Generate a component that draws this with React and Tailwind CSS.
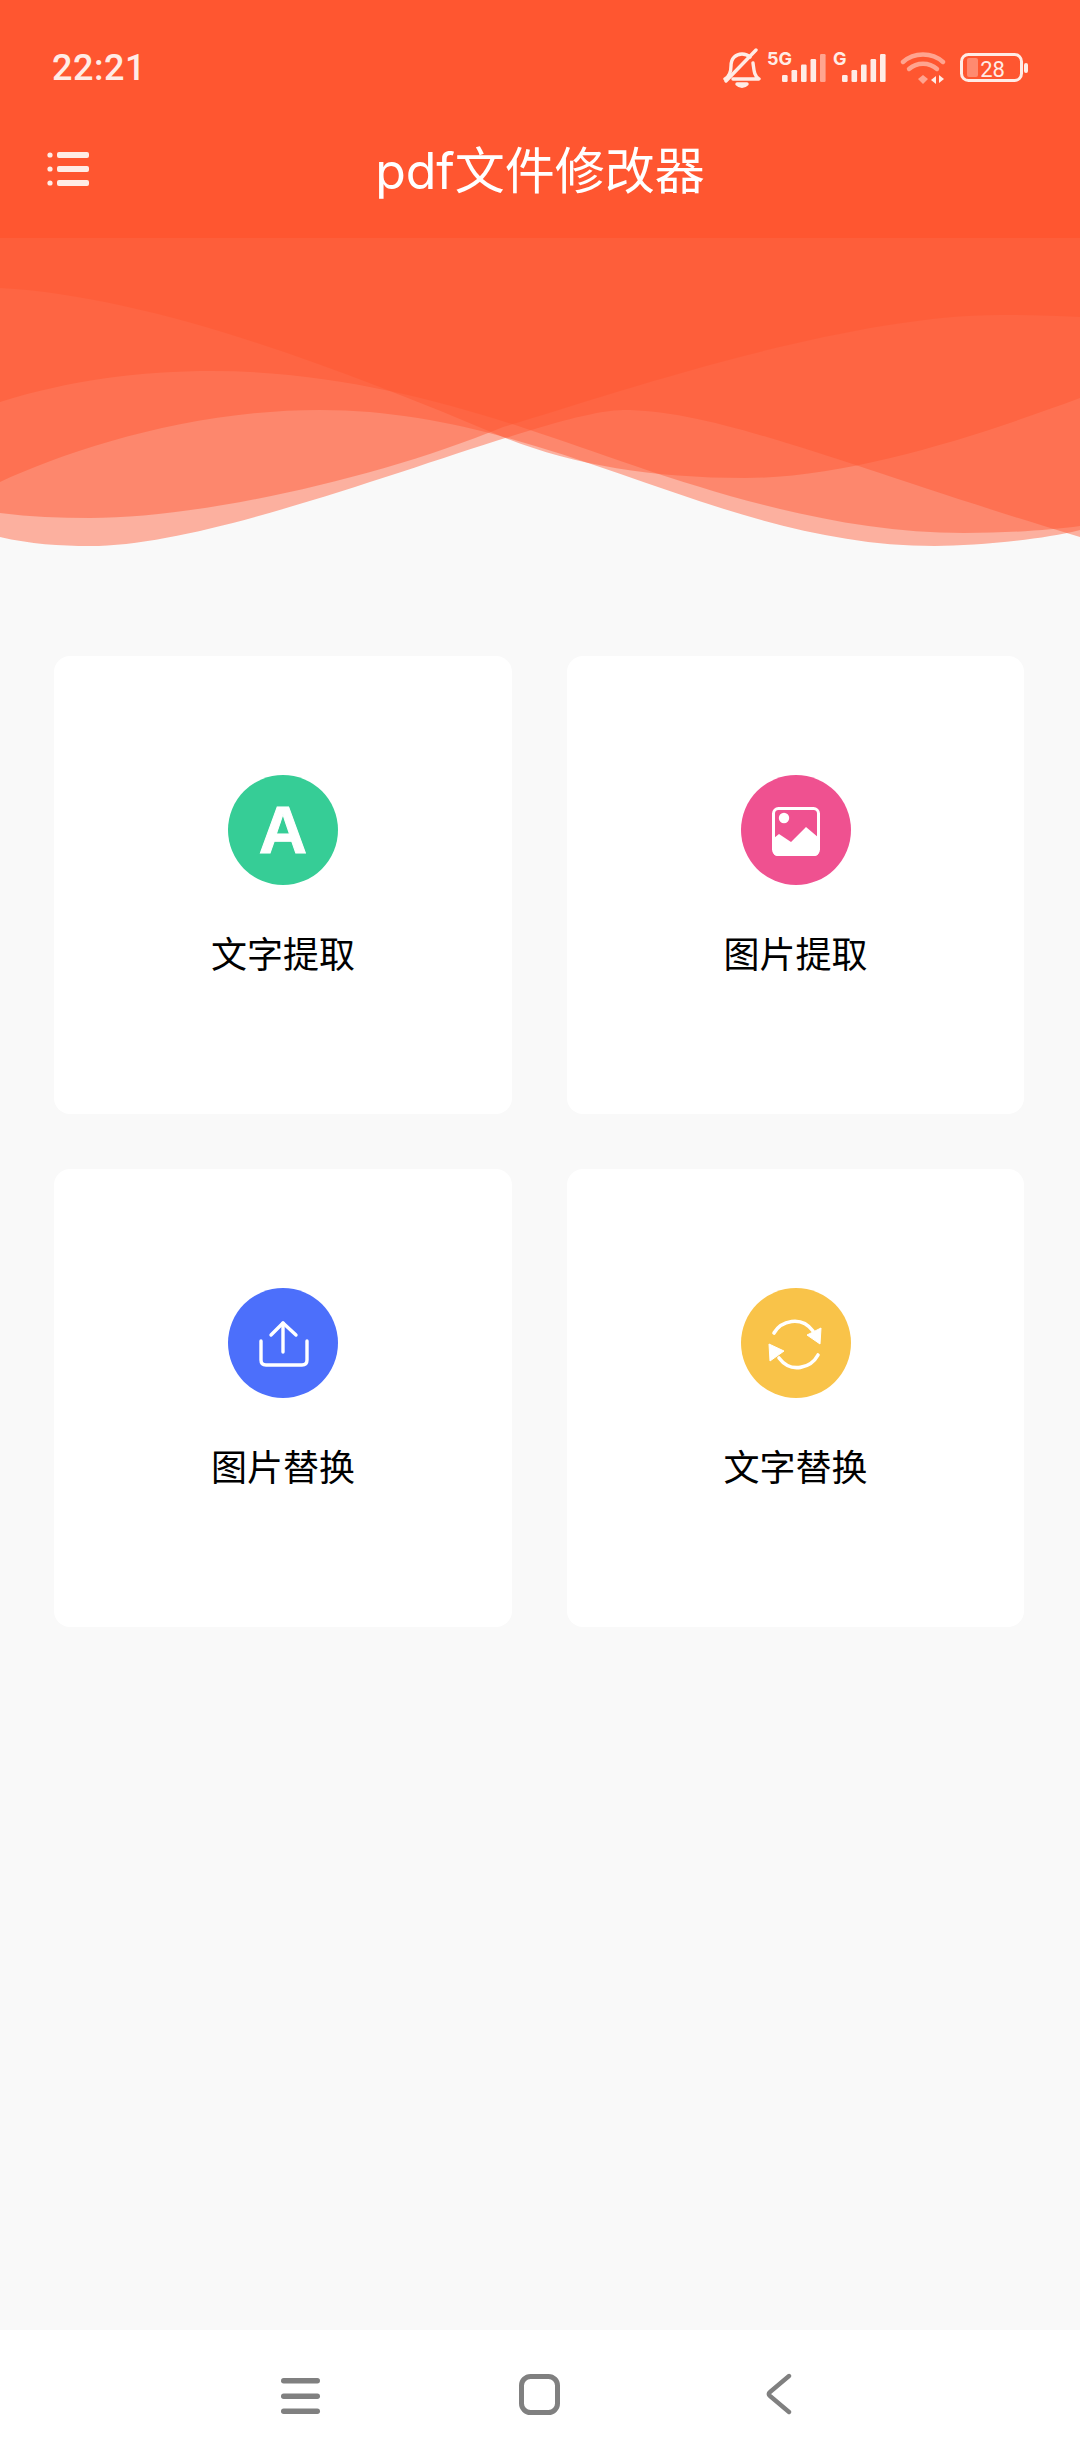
const CJK = { fontFamily: '"Inter","Noto Sans CJK SC",sans-serif' };

const close = ' L1080 238 L0 238 Z';
const waves = [
  'M0 288 C150 296 340 368 503 437 C570 464 650 478 745 478 C850 478 980 435 1080 398',
  'M0 402 C70 380 140 371 213 371 C330 371 440 400 527 429 C640 466 800 533 964 533 C1010 533 1050 530 1080 526',
  'M0 482 C70 450 190 410 320 410 C549 410 717 546 935 546 C975 546 1040 540 1080 530',
  'M0 513 C30 517 60 518 90 518 C200 518 380 478 503 427 C600 398 840 315 1000 315 C1030 315 1055 316 1080 317',
  'M0 537 C30 544 60 546 90 546 C240 546 543 410 623 410 C720 410 850 468 1080 537',
];

function Wave() {
  return (
    <svg width="1080" height="320" viewBox="0 238 1080 320" className="block">
      {waves.map((d, i) => (
        <path key={i} d={d + close} fill="#ff5630" fillOpacity="0.45" />
      ))}
    </svg>
  );
}

function Bars({ dimLast }) {
  const xs = [0, 9.5, 19, 28.5, 38];
  const tops = [21, 16, 10.5, 5, 0];
  return (
    <svg width="44" height="28" viewBox="0 0 44 28" className="block">
      {xs.map((x, i) => (
        <rect key={i} x={x} y={tops[i]} width="5.6" height={28 - tops[i]} rx="1.2" fill={dimLast && i === 4 ? '#ffa48f' : '#ffece6'} />
      ))}
    </svg>
  );
}

function StatusBar() {
  return (
    <div className="h-[136px] flex items-start justify-between pl-[52px] pr-[50px]">
      <div className="mt-[45px] text-[36px] leading-[46px] font-medium tracking-[0.5px] text-[#ffece6]" style={{ fontFamily: 'Roboto, sans-serif' }}>22:21</div>
      <div className="flex items-start mt-[48px]">
        <svg width="38" height="40" viewBox="0 0 38 40" className="block" fill="none" stroke="#ffece6" strokeWidth="3.4" strokeLinecap="round" strokeLinejoin="round">
          <path d="M2 31 C7 28 8 24 8 18 C8 10 13 6 19 6 C22 6 25 7 27 9" />
          <path d="M30 15 C31 22 31 28 36 31 L10 31" />
          <path d="M3 33 L33 2" />
          <path d="M14 36 C17 39 21 39 24 36 Z" fill="#ffece6" />
        </svg>
        <div className="relative w-[66px] h-[36px] ml-[6px]">
          <span className="absolute left-0 top-[2px] text-[18px] leading-[18px] font-bold text-[#ffece6]" style={{ fontFamily: 'Inter, sans-serif' }}>5G</span>
          <div className="absolute left-[15px] top-[6px]"><Bars dimLast /></div>
        </div>
        <div className="relative w-[53px] h-[36px]">
          <span className="absolute left-0 top-[2px] text-[18px] leading-[18px] font-bold text-[#ffece6]" style={{ fontFamily: 'Inter, sans-serif' }}>G</span>
          <div className="absolute left-[9px] top-[6px]"><Bars /></div>
        </div>
        <svg width="46" height="36" viewBox="0 0 46 36" className="block ml-[14px] mt-[2px]" fill="none" strokeLinecap="round">
          <path d="M3 12 C14 2 32 2 43 12" stroke="#ffa48f" strokeWidth="4.4" />
          <path d="M9 19 C17 12 29 12 37 19" stroke="#ffa48f" strokeWidth="4.4" />
          <path d="M18 29 L23 25 L28 29 L23 34 Z" fill="#ffa48f" />
          <path d="M36 26 L36 34 L31 30 Z M39 25 L39 33 L44 29 Z" fill="#ffece6" />
        </svg>
        <svg width="70" height="30" viewBox="0 0 70 30" className="block ml-[14px] mt-[5px]">
          <rect x="1.5" y="1.5" width="60" height="26" rx="7" fill="none" stroke="#ffece6" strokeWidth="3" />
          <rect x="7" y="5" width="11" height="19" rx="2" fill="#ff8a70" />
          <rect x="64" y="10" width="4" height="10" rx="2" fill="#ffece6" />
          <text x="32.5" y="24" textAnchor="middle" fontSize="22" fill="#ffece6" style={{ fontFamily: 'Roboto, sans-serif' }}>28</text>
        </svg>
      </div>
    </div>
  );
}

function AppBar() {
  return (
    <div className="relative h-[102px] flex justify-center">
      <svg width="42" height="36" viewBox="0 0 42 36" className="absolute left-[47px] top-[16px]" fill="#ffece6">
        <circle cx="3" cy="3" r="2.6" /><circle cx="3" cy="17" r="2.6" /><circle cx="3" cy="31" r="2.6" />
        <rect x="10" y="0" width="32" height="6" rx="2" /><rect x="10" y="14" width="32" height="6" rx="2" /><rect x="10" y="28" width="32" height="6" rx="2" />
      </svg>
      <div className="text-[50px] leading-[70px] text-white" style={CJK}>pdf文件修改器</div>
    </div>
  );
}

function IconA() {
  return (
    <span className="text-[67px] leading-[110px] font-bold text-white [-webkit-text-stroke:1px_white]" style={{ fontFamily: '"Liberation Sans", sans-serif' }}>A</span>
  );
}
function IconImage() {
  return (
    <svg width="110" height="110" viewBox="0 0 110 110" className="block">
      <rect x="32.5" y="33.5" width="45" height="46" rx="5" fill="none" stroke="#fff" strokeWidth="3" />
      <circle cx="43" cy="43" r="5.2" fill="#fff" />
      <path d="M33 63 L38 59 L50 67 L65 52 L78 63 L78 76 Q78 81 73 81 L37 81 Q32 81 32 76 Z" fill="#fff" />
    </svg>
  );
}
function IconUpload() {
  return (
    <svg width="110" height="110" viewBox="0 0 110 110" className="block" fill="none" stroke="#fff" strokeWidth="3.4" strokeLinecap="round" strokeLinejoin="round">
      <path d="M33 53 L33 72 Q33 77 38 77 L74 77 Q79 77 79 72 L79 53" />
      <path d="M55 64 L55 35" />
      <path d="M43 47 L55 35 L68 47" />
    </svg>
  );
}
function IconSync() {
  return (
    <svg width="110" height="110" viewBox="0 0 110 110" className="block">
      <g fill="none" stroke="#fff" strokeWidth="3.6" strokeLinecap="round">
        <path d="M33 45 C40 33 60 27 72 43" />
        <path d="M77 67 C70 80 50 86 38 70" />
      </g>
      <path d="M80 40 L79 56 L66 47 Z M28 56 L29 73 L43 63 Z" fill="#fff" stroke="#fff" strokeWidth="1" strokeLinejoin="round" />
    </svg>
  );
}

function Card({ color, label, children }) {
  return (
    <div className="h-[458px] bg-white rounded-[16px] flex flex-col items-center pt-[118.5px]">
      <div className="w-[110px] h-[110px] rounded-full flex items-center justify-center" style={{ backgroundColor: color }}>
        {children}
      </div>
      <div className="mt-[43px] text-[36px] leading-[48px] text-black" style={{ fontFamily: '"Noto Sans CJK SC", sans-serif' }}>{label}</div>
    </div>
  );
}

function NavBar() {
  return (
    <div className="h-[130px] bg-white flex items-start justify-between pl-[281px] pr-[288px] pt-[42px]">
      <svg width="40" height="41" viewBox="0 0 40 41" className="block mt-[3px]" fill="#808080">
        <rect x="0" y="3" width="39" height="5.4" rx="2.7" /><rect x="0" y="18.5" width="39" height="5.4" rx="2.7" /><rect x="0" y="33.5" width="39" height="5.4" rx="2.7" />
      </svg>
      <svg width="42" height="42" viewBox="0 0 42 42" className="block mt-[2px] ml-[-8px]" fill="none" stroke="#808080" strokeWidth="5">
        <rect x="2.5" y="2.5" width="36" height="36" rx="9" />
      </svg>
      <svg width="26" height="42" viewBox="0 0 26 42" className="block mt-[1px]" fill="none" stroke="#808080" strokeWidth="4.4" strokeLinecap="round" strokeLinejoin="round">
        <path d="M23 3 L4 19 Q1.5 21 4 23 L23 39" />
      </svg>
    </div>
  );
}

export default function App() {
  return (
    <div className="w-[1080px] h-[2460px] bg-[#f9f9f9] flex flex-col overflow-hidden">
      <div className="bg-[#ff5630] h-[238px]">
        <StatusBar />
        <AppBar />
      </div>
      <Wave />
      <div className="flex-1 pl-[54px] pt-[98px]">
        <div className="grid grid-cols-[458px_457px] gap-[55px]">
          <Card color="#36cd96" label="文字提取"><IconA /></Card>
          <Card color="#ef5190" label="图片提取"><IconImage /></Card>
          <Card color="#4c6ffb" label="图片替换"><IconUpload /></Card>
          <Card color="#f9c349" label="文字替换"><IconSync /></Card>
        </div>
      </div>
      <NavBar />
    </div>
  );
}
